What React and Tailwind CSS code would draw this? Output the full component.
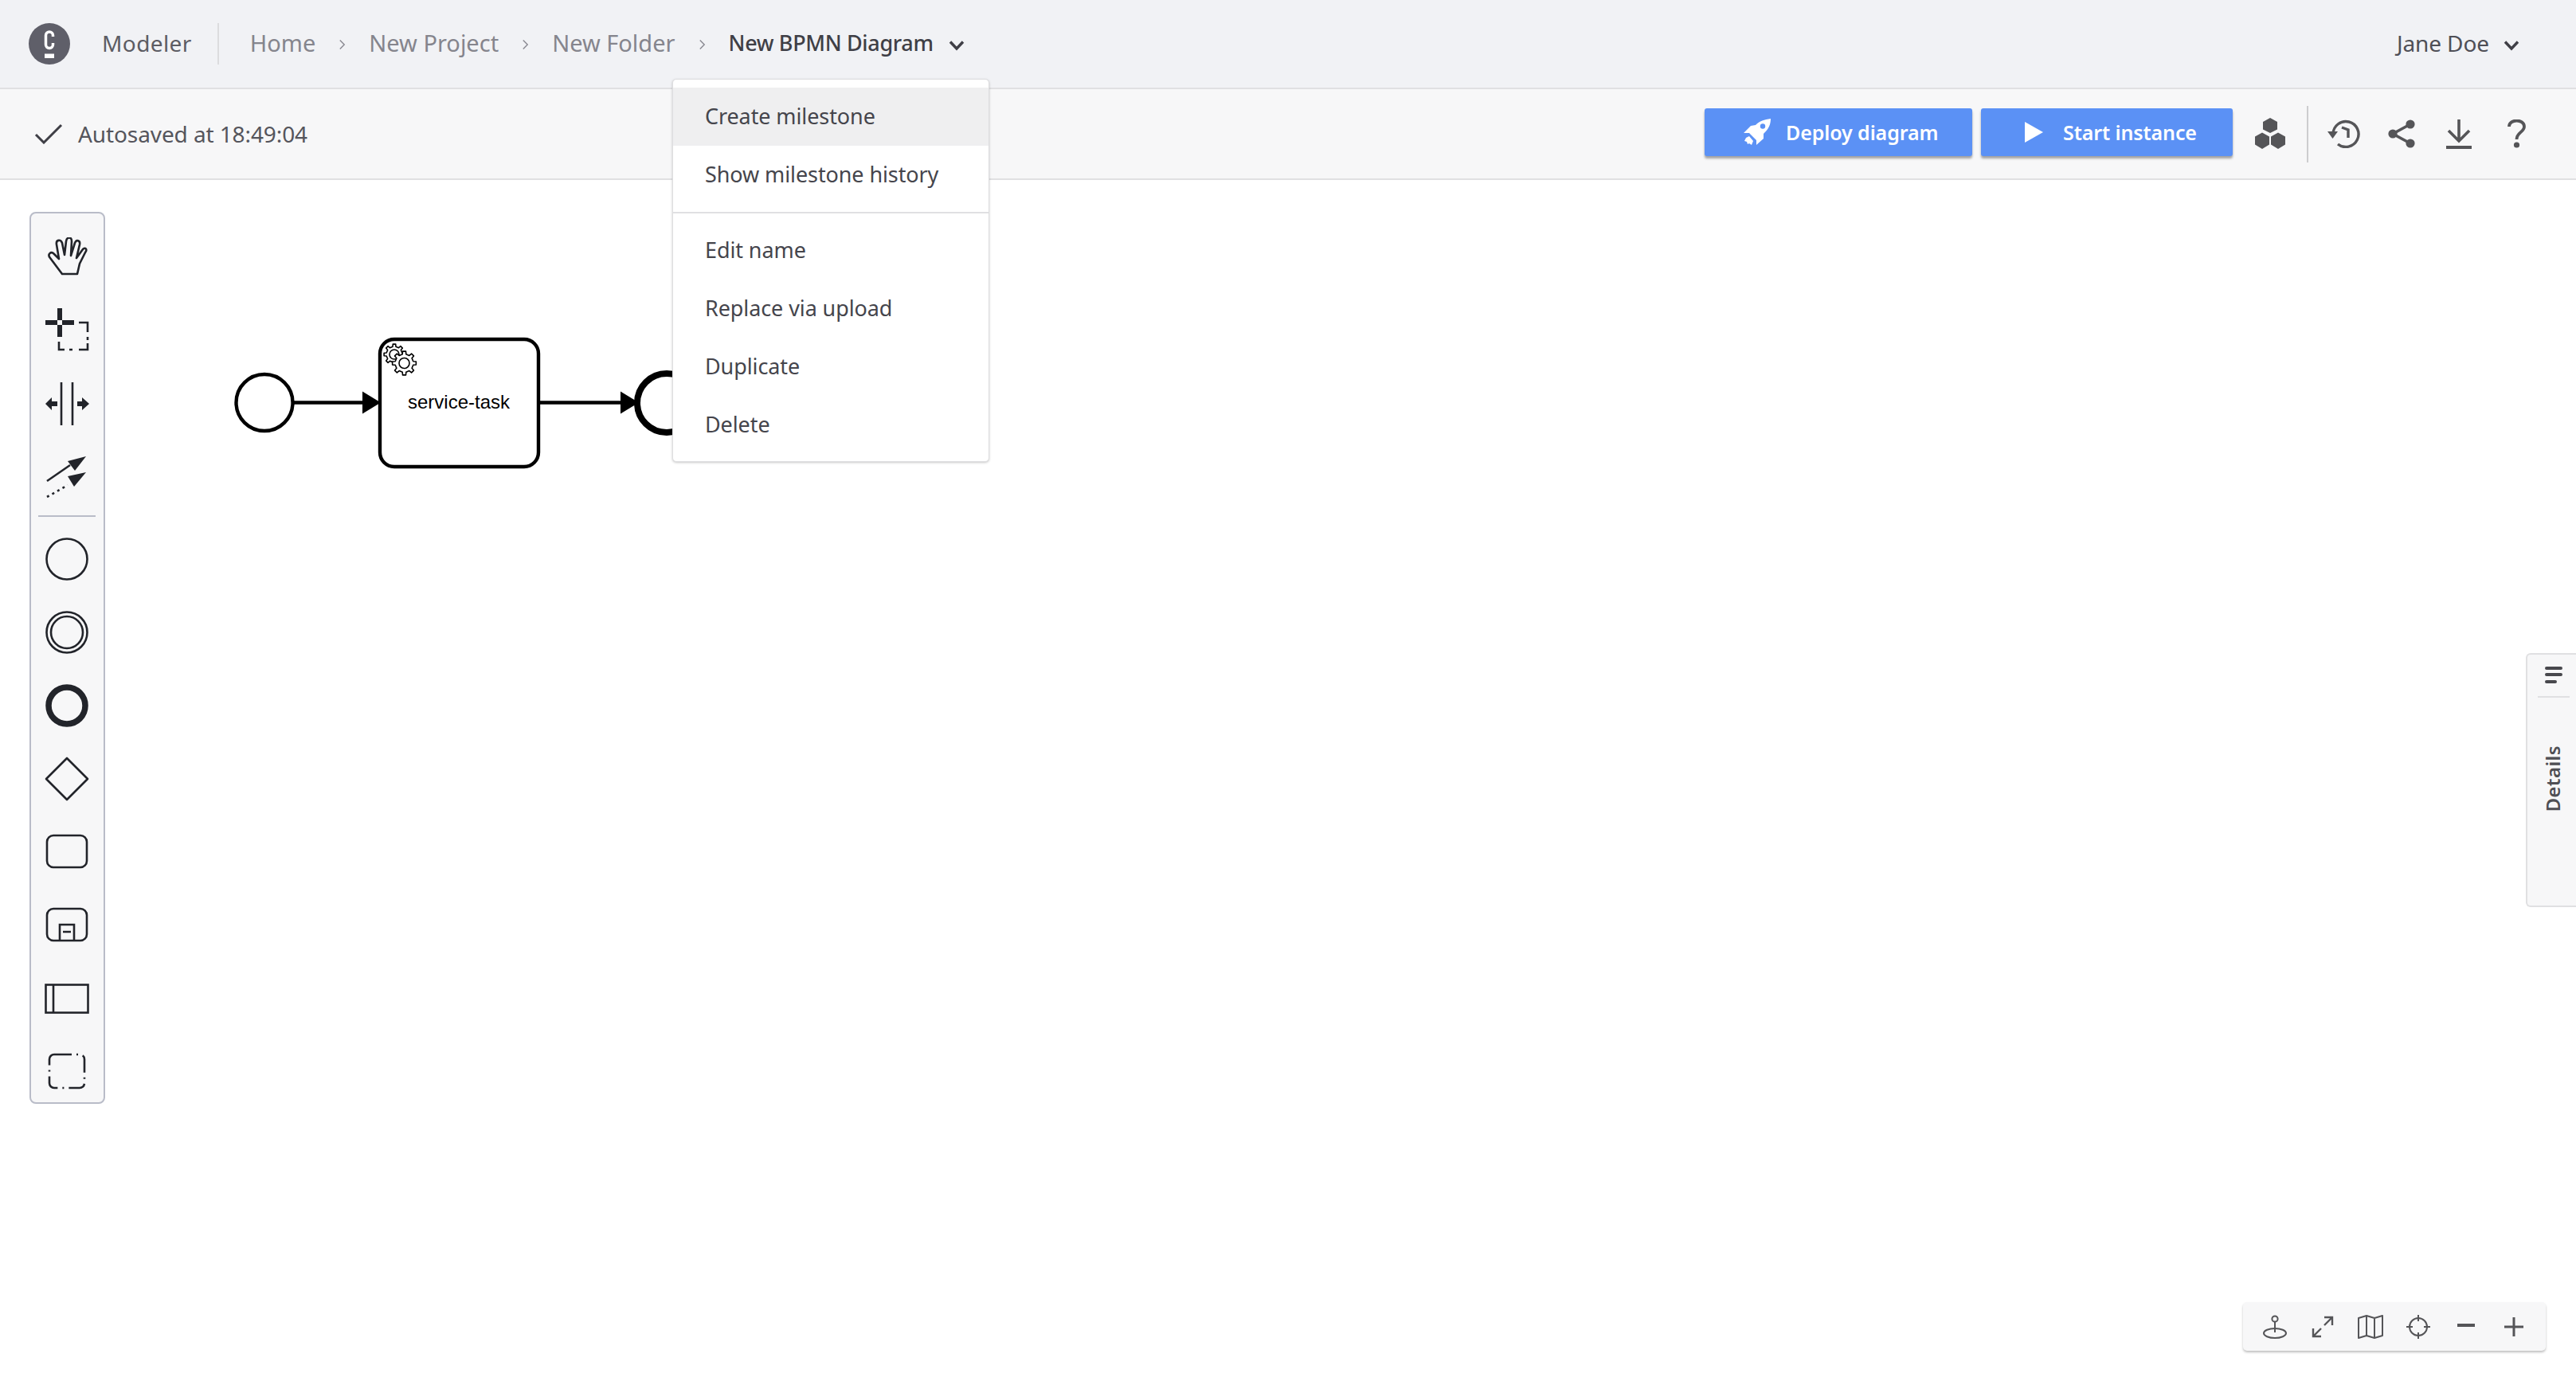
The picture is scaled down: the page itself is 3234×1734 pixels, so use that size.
import React from "react";

const ui = { fontFamily: '"Noto Sans", "Open Sans", sans-serif' };

function Chevron({ className }) {
  return (
    <svg viewBox="0 0 20 14" className={className} fill="none" stroke="#3f3f46" strokeWidth="3.4">
      <path d="M2 2.5 L10 11 L18 2.5" />
    </svg>
  );
}

function Crumb({ children }) {
  return <span className="text-[29px] leading-[36px] mb-[2px] text-[#85858d]">{children}</span>;
}

function Sep() {
  return (
    <svg viewBox="0 0 10 16" className="w-[9px] h-[16px] mx-[29px] mt-[2px]" fill="none" stroke="#8a8a92" strokeWidth="1.6">
      <path d="M2 2 L8 8 L2 14" />
    </svg>
  );
}

function TopBar() {
  return (
    <div className="h-[112px] bg-[#f1f2f5] border-b-2 border-[#e0e0e2] flex items-center pl-[36px] pr-[71px]">
      <svg viewBox="0 0 52 52" className="w-[52px] h-[52px] shrink-0">
        <circle cx="26" cy="26" r="26" fill="#5f5f69" />
        <path d="M30.5 17 L30.5 15.5 A4.5 4.5 0 0 0 21.5 15.5 L21.5 27 A4.5 4.5 0 0 0 30.5 27 L30.5 25" fill="none" stroke="#fff" strokeWidth="3.5" />
        <rect x="20" y="38.5" width="12" height="5.5" fill="#fff" />
      </svg>
      <span className="ml-[40px] text-[28px] leading-[36px] mb-[2px] tracking-[0.4px] text-[#5c5c63]">Modeler</span>
      <div className="w-[2px] h-[52px] bg-[#dcdcde] ml-[32px] mr-[39px]" />
      <Crumb>Home</Crumb>
      <Sep />
      <Crumb>New Project</Crumb>
      <Sep />
      <Crumb>New Folder</Crumb>
      <Sep />
      <span className="text-[27px] leading-[36px] mb-[2px] tracking-[-0.35px] text-[#3f3f46] font-medium">New BPMN Diagram</span>
      <Chevron className="w-[20px] h-[14px] ml-[19px] mt-[4px]" />
      <div className="flex-1" />
      <span className="text-[28px] leading-[36px] mb-[2px] tracking-[-0.1px] text-[#4f4f56]">Jane Doe</span>
      <Chevron className="w-[20px] h-[14px] ml-[18px] mt-[4px]" />
    </div>
  );
}

function Rocket() {
  return (
    <svg viewBox="0 0 34 34" className="w-[34px] h-[34px]" fill="#fff">
      <path d="M34 0 C26 1 20 3 15 8 L9 9 L0 18 L7 18 L16 27 L16 33 L25 25 L25 19 C31 13 34 8 34 0 Z" />
      <circle cx="24" cy="9.5" r="3.2" fill="#5b91f5" />
      <path d="M3 24 L7 22 L12 28 L10 33 L7 31 L5 32 L4 29 L1 28 Z" />
    </svg>
  );
}

function PrimaryButton({ icon, label, w, gap, pl }) {
  return (
    <button className={`h-[60px] ${w} ${pl} ${gap} mb-[4px] bg-[#5b91f5] rounded-[3px] shadow-[0_3px_3px_rgba(0,0,0,0.35)] flex items-center text-white text-[25px] font-semibold tracking-[-0.1px]`}>
      {icon}
      <span className="mt-[2px]">{label}</span>
    </button>
  );
}

function ToolBar() {
  const c = "#555558";
  return (
    <div className="h-[114px] bg-[#f7f7f8] border-b-2 border-[#e0e0e2] flex items-center pl-[43px] pr-[63px]">
      <svg viewBox="0 0 36 26" className="w-[36px] h-[26px]" fill="none" stroke="#3f3f46" strokeWidth="3">
        <path d="M2 14 L12 24 L34 2" />
      </svg>
      <span className="ml-[19px] text-[28px] leading-[36px] tracking-[-0.1px] text-[#55555c]">Autosaved at 18:49:04</span>
      <div className="flex-1" />
      <div className="flex items-center">
        <div className="mr-[11px]">
          <PrimaryButton w="w-[336px]" pl="pl-[49px]" gap="gap-[19px]" label="Deploy diagram" icon={<Rocket />} />
        </div>
        <PrimaryButton
          w="w-[316px]"
          pl="pl-[55px]"
          gap="gap-[25px]"
          label="Start instance"
          icon={
            <svg viewBox="0 0 23 26" className="w-[23px] h-[26px]" fill="#fff">
              <path d="M0 0 L23 13 L0 26 Z" />
            </svg>
          }
        />
        <svg viewBox="0 0 40 40" className="w-[40px] h-[40px] ml-[27px]" fill={c}>
          <path d="M20 0 L29 5 L29 14.5 L20 19 L11 14.5 L11 5 Z" />
          <path d="M10 18.5 L19 23.5 L19 33.5 L10 39 L1 33.5 L1 23.5 Z" />
          <path d="M30 18.5 L39 23.5 L39 33.5 L30 39 L21 33.5 L21 23.5 Z" />
        </svg>
        <div className="w-[2px] h-[71px] bg-[#cdcdcf] ml-[26px] mr-[24px]" />
        <svg viewBox="0 0 42 36" className="w-[42px] h-[36px]" fill="none" stroke={c} strokeWidth="3.4">
          <path d="M7 18 A16 16 0 1 1 13 31" />
          <path d="M0 15 L13 15 L6.5 24 Z" fill={c} stroke="none" />
          <path d="M18 10 L26 13 L26 23" />
        </svg>
        <svg viewBox="0 0 34 36" className="w-[34px] h-[36px] ml-[34px]" fill={c} stroke={c}>
          <path d="M28 6 L6 18 L28 30" fill="none" strokeWidth="3.6" />
          <circle cx="28" cy="6" r="5.6" stroke="none" />
          <circle cx="6" cy="18" r="5.6" stroke="none" />
          <circle cx="28" cy="30" r="5.6" stroke="none" />
        </svg>
        <svg viewBox="0 0 32 37" className="w-[32px] h-[37px] ml-[39px]" fill="none" stroke={c} strokeWidth="3.6">
          <path d="M16 0 L16 25 M3 14 L16 27 L29 14" />
          <path d="M0 35 L32 35" strokeWidth="4" />
        </svg>
        <svg viewBox="0 0 23 36" className="w-[23px] h-[36px] ml-[45px]" fill="none" stroke={c} strokeWidth="3.8">
          <path d="M2 9 C2 -1 21 -1 21 9 C21 16 11.5 16 11.5 25" />
          <circle cx="11.5" cy="32" r="3.6" fill={c} stroke="none" />
        </svg>
      </div>
    </div>
  );
}

function gearPath(cx, cy, rOut, rIn, teeth) {
  const pts = [];
  const step = (Math.PI * 2) / teeth;
  for (let i = 0; i < teeth; i++) {
    const a = i * step;
    const w = step * 0.17;
    const p = (r, t) => `${(cx + r * Math.cos(t)).toFixed(2)} ${(cy + r * Math.sin(t)).toFixed(2)}`;
    pts.push(p(rIn, a - w * 1.5), p(rOut, a - w), p(rOut, a + w), p(rIn, a + w * 1.5));
  }
  return "M" + pts.join(" L") + " Z";
}

function Diagram() {
  return (
    <svg viewBox="0 0 900 600" className="absolute left-0 top-0 w-[900px] h-[600px]" fill="none" stroke="#000">
      <circle cx="332" cy="505.5" r="35.5" strokeWidth="4.4" />
      <path d="M369 505.5 L458 505.5" strokeWidth="4.4" />
      <path d="M455 491.5 L478 505.5 L455 519.5 Z" fill="#000" stroke="none" />
      <rect x="477" y="426" width="199" height="160" rx="18" strokeWidth="4.4" fill="#fff" />
      <path d="M678 505.5 L782 505.5" strokeWidth="4.4" />
      <path d="M779 491.5 L802 505.5 L779 519.5 Z" fill="#000" stroke="none" />
      <circle cx="837" cy="506" r="37" strokeWidth="8" />
      <g fill="#fff" stroke="#000" strokeWidth="1.6" strokeLinejoin="round">
        <path d={gearPath(495, 445, 13, 10, 8)} />
        <circle cx="495" cy="445" r="6" />
        <path d={gearPath(507.5, 456, 15, 11.5, 8)} />
        <circle cx="507.5" cy="456" r="6.5" />
      </g>
      <text x="576" y="513" textAnchor="middle" fill="#000" stroke="none" fontSize="24" style={{ fontFamily: '"Liberation Sans", sans-serif' }}>service-task</text>
    </svg>
  );
}

const ink = "#22242a";

function PaletteIcon({ h, children, vb, w = 60, className = "" }) {
  return (
    <svg viewBox={vb} style={{ width: w, height: h }} className={`block mx-auto ${className}`} fill="none" stroke={ink} strokeWidth="2.6">
      {children}
    </svg>
  );
}

function Palette() {
  return (
    <div className="absolute left-[37px] top-[266px] w-[95px] h-[1120px] rounded-[8px] border-2 border-[#b9bcc8] bg-[#f7f7f8] pt-[30px] pr-[1px]">
      <PaletteIcon vb="0 0 60 48" h={48}>
        <path d="M24 46 L9 26 C5 21 10 17 14 21 L20 27 L17 9 C16 3 22 2 24 7 L27 22 L29 5 C30 -1 36 -1 36 5 L35 23 L40 7 C42 2 47 4 46 9 L42 26 L50 15 C53 12 56 15 53 19 L46 33 L43 46 Z" strokeLinejoin="round" />
      </PaletteIcon>
      <PaletteIcon vb="0 0 60 54" h={54} className="mt-[41px]">
        <path d="M3 18 L39 18 M21 0 L21 36" strokeWidth="6" strokeDasharray="15 6" />
        <path d="M45 18 L56 18 L56 30 M56 36 L56 40 M56 44 L56 52 L45 52 M37 52 L33 52 M27 52 L20 52 L20 42" />
      </PaletteIcon>
      <PaletteIcon vb="0 0 60 54" h={54} className="mt-[39px]">
        <path d="M23 0 L23 54 M37 0 L37 54" />
        <path d="M3 27 L11 19 L11 24 L18 24 L18 30 L11 30 L11 35 Z" fill={ink} stroke="none" />
        <path d="M58 27 L49 19 L49 24 L43 24 L43 30 L49 30 L49 35 Z" fill={ink} stroke="none" />
      </PaletteIcon>
      <PaletteIcon vb="0 0 60 52" h={52} className="mt-[39px]">
        <path d="M5 31 L34 11" />
        <path d="M54 0 L31 6 L40 18 Z" fill={ink} stroke="none" />
        <path d="M5 51 L31 36" strokeDasharray="3 4.5" />
        <path d="M54 20 L31 25 L39 38 Z" fill={ink} stroke="none" />
      </PaletteIcon>
      <div className="w-[72px] h-[2px] bg-[#b9bcc8] mx-auto mt-[22px]" />
      <div className="mt-[25px]">
        <PaletteIcon vb="0 0 56 56" h={56}><circle cx="28" cy="28" r="25.5" /></PaletteIcon>
        <PaletteIcon vb="0 0 56 56" h={56} className="mt-[36px]"><circle cx="28" cy="28" r="25.5" /><circle cx="28" cy="28" r="20" /></PaletteIcon>
        <PaletteIcon vb="0 0 56 56" h={56} className="mt-[36px]"><circle cx="28" cy="28" r="23" strokeWidth="7.5" /></PaletteIcon>
        <PaletteIcon vb="0 0 56 56" h={56} className="mt-[36px]"><path d="M28 2 L54 28 L28 54 L2 28 Z" strokeLinejoin="round" /></PaletteIcon>
        <PaletteIcon vb="0 0 56 44" h={44} className="mt-[41px]"><rect x="3" y="2" width="50" height="40" rx="8" /></PaletteIcon>
        <PaletteIcon vb="0 0 56 44" h={44} className="mt-[48px]">
          <rect x="3" y="2" width="50" height="40" rx="8" />
          <path d="M19 42 L19 22 L37 22 L37 42 M23 31 L33 31" />
        </PaletteIcon>
        <PaletteIcon vb="0 0 56 38" h={38} className="mt-[52px]"><rect x="1.5" y="1.5" width="53" height="35" /><path d="M11 1.5 L11 36.5" /></PaletteIcon>
        <PaletteIcon vb="0 0 48 46" w={48} h={46} className="mt-[49px]">
          <rect x="2" y="2" width="44" height="42" rx="6" strokeDasharray="22 6 2 6" />
        </PaletteIcon>
      </div>
    </div>
  );
}

function Menu() {
  const Item = ({ children, active }) => (
    <div className={`h-[73px] flex items-center pl-[40px] text-[27px] tracking-[-0.1px] text-[#45454c] ${active ? "bg-[#efeff0]" : ""}`}>{children}</div>
  );
  return (
    <div className="absolute left-[844px] top-[99px] w-[398px] h-[481px] bg-white border border-[#dedee0] rounded-[5px] shadow-[0_1px_3px_rgba(0,0,0,0.22)] pt-[10px] z-10">
      <Item active>Create milestone</Item>
      <Item>Show milestone history</Item>
      <div className="h-[2px] bg-[#e0e0e2] mt-[10px] mb-[10px]" />
      <Item>Edit name</Item>
      <Item>Replace via upload</Item>
      <Item>Duplicate</Item>
      <Item>Delete</Item>
    </div>
  );
}

function Details() {
  return (
    <div className="absolute left-[3171px] top-[820px] w-[63px] h-[319px] bg-[#f7f7f8] border-2 border-r-0 border-[#e0e0e2] rounded-l-[6px] flex flex-col items-center pl-[4px]">
      <svg viewBox="0 0 22 21" className="w-[22px] h-[21px] mt-[15px]" fill="none" stroke="#48484d" strokeWidth="4" strokeLinecap="round">
        <path d="M2 2 L20 2 M2 10 L20 10 M2 19 L13 19" />
      </svg>
      <div className="w-[40px] h-[2px] bg-[#e0e0e2] mt-[16px]" />
      <span className="mt-[60px] mr-[2px] text-[24px] leading-[24px] font-semibold text-[#4f4f54] tracking-[0.4px] [writing-mode:vertical-rl] rotate-180">Details</span>
    </div>
  );
}

function ZoomBar() {
  const c = "#555558";
  return (
    <div className="absolute left-[2816px] top-[1635px] w-[380px] h-[61px] bg-[#f7f7f8] rounded-[5px] shadow-[0_2px_3px_rgba(0,0,0,0.25)] flex items-center pl-[25px]">
      <svg viewBox="0 0 30 30" className="w-[30px] h-[30px]" fill="none" stroke={c} strokeWidth="2">
        <circle cx="15" cy="5" r="3.6" />
        <path d="M15 9 L15 22" />
        <ellipse cx="15" cy="23" rx="14" ry="6" />
      </svg>
      <svg viewBox="0 0 28 28" className="w-[28px] h-[28px] ml-[31px]" fill="none" stroke={c} strokeWidth="2.4">
        <path d="M16 12 L26 2 M16 2 L26 2 L26 12 M12 16 L2 26 M2 16 L2 26 L12 26" />
      </svg>
      <svg viewBox="0 0 32 30" className="w-[32px] h-[30px] ml-[30px]" fill="none" stroke={c} strokeWidth="2">
        <path d="M1 4 L11 1 L21 4 L31 1 L31 26 L21 29 L11 26 L1 29 Z M11 1 L11 26 M21 4 L21 29" strokeLinejoin="round" />
      </svg>
      <svg viewBox="0 0 30 30" className="w-[30px] h-[30px] ml-[29px]" fill="none" stroke={c} strokeWidth="2">
        <circle cx="15" cy="15" r="11" />
        <path d="M15 0 L15 8 M15 22 L15 30 M0 15 L8 15 M22 15 L30 15" />
      </svg>
      <svg viewBox="0 0 22 4" className="w-[22px] h-[4px] ml-[34px] -mt-[4px]">
        <rect width="22" height="4" fill={c} />
      </svg>
      <svg viewBox="0 0 24 24" className="w-[24px] h-[24px] ml-[37px]" fill="none" stroke={c} strokeWidth="3">
        <path d="M12 0 L12 24 M0 12 L24 12" />
      </svg>
    </div>
  );
}

export default function App() {
  return (
    <div className="relative w-[3234px] h-[1734px] overflow-hidden bg-white" style={ui}>
      <TopBar />
      <ToolBar />
      <Diagram />
      <Palette />
      <Menu />
      <Details />
      <ZoomBar />
    </div>
  );
}
